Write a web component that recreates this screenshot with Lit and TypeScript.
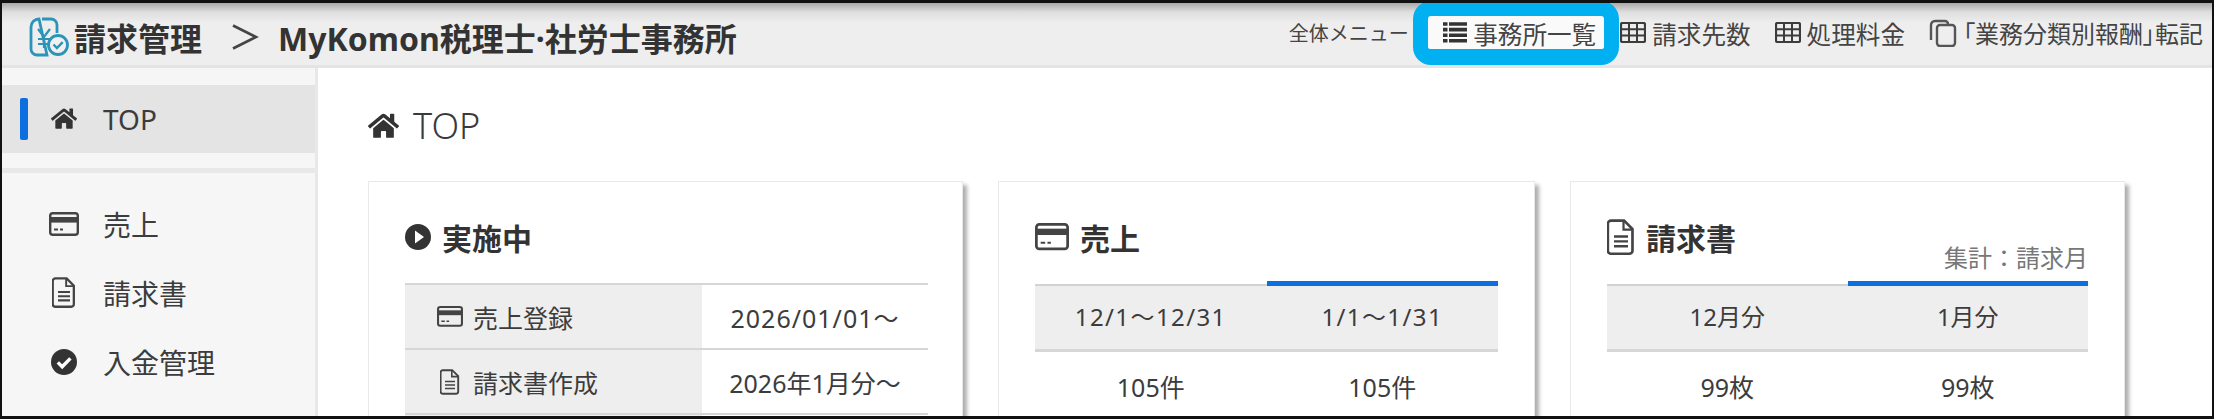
import { LitElement, html, css, svg } from "lit";
import { customElement } from "lit/decorators.js";

const homePath =
  "M280.37 148.26L96 300.11V464a16 16 0 0 0 16 16l112.06-.29a16 16 0 0 0 15.92-16V368a16 16 0 0 1 16-16h64a16 16 0 0 1 16 16v95.64a16 16 0 0 0 16 16.05L464 480a16 16 0 0 0 16-16V300L295.67 148.26a12.19 12.19 0 0 0-15.3 0zM571.6 251.47L488 182.56V44.05a12 12 0 0 0-12-12h-56a12 12 0 0 0-12 12v72.61L318.47 43a48 48 0 0 0-61 0L4.34 251.47a12 12 0 0 0-1.6 16.9l25.5 31A12 12 0 0 0 45.15 301l235.22-193.74a12.19 12.19 0 0 1 15.3 0L530.9 301a12 12 0 0 0 16.9-1.6l25.5-31a12 12 0 0 0-1.7-16.93z";

const homeIcon = (w: number) =>
  html`<svg width=${w} height=${w * 0.89} viewBox="0 0 576 512"><path fill="#333" d=${homePath}></path></svg>`;

const cardIcon = (w: number) => html`<svg width=${w} height=${w * 0.8} viewBox="0 0 30 24">
  <rect x="1.2" y="1.2" width="27.6" height="21.6" rx="2.6" fill="none" stroke="#444" stroke-width="2.4"></rect>
  <rect x="1.2" y="5" width="27.6" height="5.6" fill="#444"></rect>
  <path d="M5 17.5h4M11 17.5h3" stroke="#444" stroke-width="1.8"></path>
</svg>`;

const fileIcon = (w: number) => html`<svg width=${w} height=${w * 1.3} viewBox="0 0 20 26">
  <path d="M2.8 1.2h9.4l6 6v15.4a2.2 2.2 0 0 1-2.2 2.2H2.8a2.2 2.2 0 0 1-2.2-2.2V3.4a2.2 2.2 0 0 1 2.2-2.2z" fill="none" stroke="#444" stroke-width="1.9"></path>
  <path d="M11.8 1.4v6.2h6.2" fill="none" stroke="#444" stroke-width="1.6"></path>
  <path d="M5 12.5h10M5 16h10M5 19.5h10" stroke="#444" stroke-width="1.7"></path>
</svg>`;

const playIcon = (s: number) => html`<svg width=${s} height=${s} viewBox="0 0 26 26">
  <circle cx="13" cy="13" r="13" fill="#333"></circle>
  <path d="M10 6.6l9 6.4-9 6.4z" fill="#fff"></path>
</svg>`;

const checkIcon = (s: number) => html`<svg width=${s} height=${s} viewBox="0 0 26 26">
  <circle cx="13" cy="13" r="13" fill="#333"></circle>
  <path d="M6.8 13.4l4.4 4.4 8.2-8.4" fill="none" stroke="#fff" stroke-width="3.4"></path>
</svg>`;

const listIcon = html`<svg width="24" height="21" viewBox="0 0 24 21">
  <path d="M0 2h4.5M6 2h18M0 7.6h4.5M6 7.6h18M0 13.2h4.5M6 13.2h18M0 18.8h4.5M6 18.8h18" stroke="#333" stroke-width="3.6"></path>
</svg>`;

const tableIcon = html`<svg width="26" height="21" viewBox="0 0 26 21">
  <rect x="1" y="1" width="24" height="19" rx="1.5" fill="none" stroke="#3c3c3c" stroke-width="2.2"></rect>
  <path d="M1 7.3h24M1 13.6h24M9 1v19M17 1v19" stroke="#3c3c3c" stroke-width="2"></path>
</svg>`;

const copyIcon = html`<svg width="30" height="28" viewBox="0 0 30 28">
  <path d="M2 21V6a4 4 0 0 1 4-4h10a3 3 0 0 1 3 3" fill="none" stroke="#555" stroke-width="2.4"></path>
  <rect x="8" y="6" width="18" height="21" rx="3" fill="#eee" stroke="#555" stroke-width="2.4"></rect>
</svg>`;

const logo = svg`
  <path d="M13 2h9a6 6 0 0 1 6 6v8M18 38H8a6 6 0 0 1-6-6V10a8 8 0 0 1 8-8z" fill="none" stroke="#2b94b8" stroke-width="2.8"></path>
  <path d="M9 12l6 8 6-8M15 20v11M9 22h12M9 27h12" fill="none" stroke="#2b94b8" stroke-width="2.2"></path>
  <circle cx="29" cy="28" r="9.5" fill="#f0f0f0" stroke="#2b94b8" stroke-width="2.8"></circle>
  <path d="M24.5 27.5l3.4 3.6 5.8-6" fill="none" stroke="#2b94b8" stroke-width="2.4"></path>
`;

const sideItems = [
  { icon: cardIcon(30), label: "売上" },
  { icon: fileIcon(24), label: "請求書" },
  { icon: checkIcon(26), label: "入金管理" },
];

const menuItems = [
  { icon: listIcon, label: "事務所一覧", active: true },
  { icon: tableIcon, label: "請求先数" },
  { icon: tableIcon, label: "処理料金" },
  { icon: copyIcon, label: "「業務分類別報酬」転記", tight: true },
];

@customElement("app-root")
export class AppRoot extends LitElement {
  static styles = css`
    :host {
      display: block;
      box-sizing: border-box;
      width: 2214px;
      height: 419px;
      overflow: hidden;
      border: solid #111;
      border-width: 3px 2px;
      background: #fff;
      color: #3c3c3c;
      font-family: "Noto Sans", "Noto Sans CJK JP", sans-serif;
    }
    svg {
      display: block;
      flex: none;
    }

    .header {
      display: flex;
      align-items: center;
      box-sizing: border-box;
      height: 65px;
      padding: 5px 0 0 27px;
      background: linear-gradient(#a9a9a9 0, #dedede 9px, #eee 20px);
      border-bottom: 3px solid #e4e4e4;
    }
    .app-name {
      margin-left: 5px;
      font-size: 32px;
      font-weight: 700;
      color: #333;
    }
    .chevron {
      margin: 0 19px 0 29px;
    }
    .office {
      font-size: 32px;
      font-weight: 700;
      color: #333;
      white-space: nowrap;
    }
    .menu {
      display: flex;
      align-items: center;
      gap: 24px;
      margin: -8px 0 0 auto;
      padding-right: 9px;
      font-size: 24.6px;
      color: #444;
      white-space: nowrap;
    }
    .menu-title {
      font-size: 20px;
    }
    .menu-item {
      display: flex;
      align-items: center;
      gap: 6px;
      height: 33px;
    }
    .menu-item.tight {
      gap: 4px;
      font-size: 24px;
      font-feature-settings: "palt";
    }
    .menu-item.active {
      position: relative;
      isolation: isolate;
    }
    .menu-item.active::before {
      content: "";
      position: absolute;
      z-index: -1;
      top: -15px;
      bottom: -16px;
      left: -30px;
      right: -23px;
      border: solid #00b0f0;
      border-width: 15px 15px 16px;
      border-radius: 18px;
      background: #fafafa;
    }

    .body {
      display: flex;
      height: 351px;
    }
    .sidebar {
      flex: none;
      box-sizing: border-box;
      width: 316px;
      padding-top: 17px;
      background: #f6f6f6;
      border-right: 3px solid #e8e8e8;
      font-size: 28px;
    }
    .side-top {
      display: flex;
      align-items: center;
      height: 68px;
      background: #e4e4e4;
    }
    .side-mark {
      width: 8px;
      height: 42px;
      margin: 0 23px 0 18px;
      border-radius: 2px;
      background: #0b6fe0;
    }
    .side-top span {
      margin-left: 26px;
    }
    .side-sep {
      height: 5px;
      margin: 15px 0 16px;
      background: #e8e8e8;
    }
    .side-item {
      display: flex;
      align-items: center;
      height: 69px;
      padding-left: 47px;
    }
    .side-icon {
      display: flex;
      justify-content: center;
      width: 30px;
      margin-right: 24px;
    }

    .main {
      flex: 1;
      padding-left: 50px;
    }
    .page-title {
      display: flex;
      align-items: center;
      gap: 14px;
      height: 113px;
      padding-top: 2px;
      box-sizing: border-box;
      font-size: 36px;
      font-weight: 300;
      color: #3a3a3a;
    }
    .cards {
      display: flex;
      gap: 35px;
      align-items: flex-start;
    }
    .card {
      box-sizing: border-box;
      height: 400px;
      padding: 34px 36px 0;
      background: #fff;
      border: 1px solid #e9e9e9;
      box-shadow: 4px 4px 4px rgba(0, 0, 0, 0.32);
    }
    .card-head {
      display: flex;
      align-items: center;
      gap: 11px;
      height: 42px;
      margin-bottom: 25px;
      font-size: 30px;
      font-weight: 700;
      color: #333;
    }
    .card-note {
      margin-left: auto;
      align-self: flex-end;
      margin-bottom: -16px;
      font-size: 24px;
      font-weight: 400;
      color: #777;
    }

    .status {
      display: grid;
      grid-template-columns: 297px 226px;
      font-size: 25px;
    }
    .status > div {
      display: flex;
      align-items: center;
      height: 65px;
      box-sizing: border-box;
      border-top: 2px solid #d6d6d6;
    }
    .status .label {
      gap: 8px;
      padding-left: 30px;
      background: #eee;
    }
    .status .icon-box {
      display: flex;
      justify-content: center;
      width: 30px;
    }
    .status .value {
      justify-content: center;
    }
    .date {
      letter-spacing: 1px;
    }

    .period {
      display: grid;
      grid-template-columns: 1fr 1fr;
      font-size: 24px;
      text-align: center;
    }
    .period .th {
      height: 68px;
      line-height: 62px;
      box-sizing: border-box;
      margin-top: 1px;
      background: #eee;
      border-top: 2px solid #d2d2d2;
      border-bottom: 3px solid #d6d6d6;
    }
    .period .th.date {
      letter-spacing: 1.4px;
    }
    .period .th.current {
      margin-top: -2px;
      height: 71px;
      border-top: 5px solid #0b6fe0;
    }
    .period .td {
      height: 70px;
      line-height: 70px;
      font-size: 25px;
    }
  `;

  renderPeriod(heads: string[], values: string[]) {
    return html`<div class="period">
      ${heads.map(
        (h, i) =>
          html`<div class="th ${i === 1 ? "current" : ""} ${h.includes("/") ? "date" : ""}">${h}</div>`
      )}
      ${values.map((v) => html`<div class="td">${v}</div>`)}
    </div>`;
  }

  render() {
    return html`
      <div class="header">
        <svg width="40" height="40" viewBox="0 0 40 40">${logo}</svg>
        <div class="app-name">請求管理</div>
        <svg class="chevron" width="28" height="26" viewBox="0 0 28 26">
          <path d="M2 1.5l23 11.5-23 11.5" fill="none" stroke="#444" stroke-width="2.6"></path>
        </svg>
        <div class="office">MyKomon税理士·社労士事務所</div>
        <div class="menu">
          <div class="menu-title">全体メニュー :</div>
          ${menuItems.map(
            (m) =>
              html`<div class="menu-item ${m.active ? "active" : ""} ${m.tight ? "tight" : ""}">
                ${m.icon}<span>${m.label}</span>
              </div>`
          )}
        </div>
      </div>
      <div class="body">
        <div class="sidebar">
          <div class="side-top">
            <div class="side-mark"></div>
            ${homeIcon(26)}
            <span>TOP</span>
          </div>
          <div class="side-sep"></div>
          ${sideItems.map(
            (s) => html`<div class="side-item"><div class="side-icon">${s.icon}</div>${s.label}</div>`
          )}
        </div>
        <div class="main">
          <div class="page-title">${homeIcon(31)}<span>TOP</span></div>
          <div class="cards">
            <div class="card" style="width: 595px">
              <div class="card-head">${playIcon(26)}<span>実施中</span></div>
              <div class="status">
                <div class="label"><span class="icon-box">${cardIcon(26)}</span>売上登録</div>
                <div class="value date">2026/01/01～</div>
                <div class="label"><span class="icon-box">${fileIcon(20)}</span>請求書作成</div>
                <div class="value">2026年1月分～</div>
                <div class="label"></div>
                <div class="value"></div>
              </div>
            </div>
            <div class="card" style="width: 537px">
              <div class="card-head">${cardIcon(34)}<span>売上</span></div>
              ${this.renderPeriod(["12/1～12/31", "1/1～1/31"], ["105件", "105件"])}
            </div>
            <div class="card" style="width: 555px">
              <div class="card-head">
                ${fileIcon(28)}<span>請求書</span><span class="card-note">集計：請求月</span>
              </div>
              ${this.renderPeriod(["12月分", "1月分"], ["99枚", "99枚"])}
            </div>
          </div>
        </div>
      </div>
    `;
  }
}
